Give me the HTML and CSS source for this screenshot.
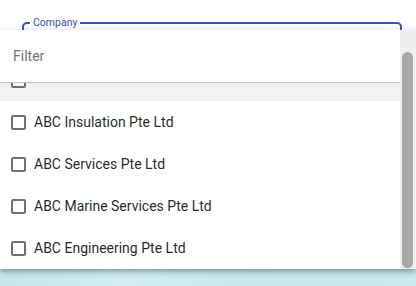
FILE: index.html
```html
<!DOCTYPE html>
<html lang="en">

<head>
  <meta charset="UTF-8" />
  <meta name="viewport" content="width=device-width, initial-scale=1.0" />
  <title>Company Select</title>
  <link rel="stylesheet" href="styles.css">
</head>

<body>
  <div class="card">
    <fieldset class="field">
      <legend>Company</legend>
    </fieldset>
  </div>

  <div class="panel">
    <div class="list" id="list">
      <div class="filter">
        <input type="text" placeholder="Filter" />
      </div>
      <div class="option active"><span class="box"></span></div>
      <div class="option"><span class="box"></span>ABC Insulation Pte Ltd</div>
      <div class="option"><span class="box"></span>ABC Services Pte Ltd</div>
      <div class="option"><span class="box"></span>ABC Marine Services Pte Ltd</div>
      <div class="option"><span class="box"></span>ABC Engineering Pte Ltd</div>
    </div>
    <div class="scrollbar">
      <div class="thumb"></div>
    </div>
  </div>

  <script>
    const list = document.getElementById('list');
    list.scrollTop = list.scrollHeight;
  </script>
</body>

</html>
```

FILE: styles.css
```css
body {
  margin: 0;
  padding: 0;
  font-family: Roboto, 'Liberation Sans', sans-serif;
  background: linear-gradient(90deg, #c4e6ec, #d2eef2 30%, #c8e8ee 60%, #cbe9ef);
  height: 286px;
  overflow: hidden;
}

.card {
  background-color: #fff;
  height: 266px;
  padding-top: 17px;
  box-sizing: border-box;
}

.field {
  margin: 0 14px 0 22px;
  padding: 0 0 0 6px;
  height: 60px;
  border: 2px solid #3f51b5;
  border-radius: 5px;
}

.field legend {
  padding: 0 3px;
  font-size: 10.5px;
  line-height: 12px;
  color: #3f51b5;
}

.panel {
  position: absolute;
  top: 30px;
  left: 0;
  width: 416px;
  height: 239px;
  display: flex;
  background-color: #fff;
  box-shadow: 0 2px 4px -1px rgba(0, 0, 0, 0.2), 0 4px 5px 0 rgba(0, 0, 0, 0.14), 0 1px 10px 0 rgba(0, 0, 0, 0.12);
}

.list {
  flex: 1;
  overflow: hidden;
}

.scrollbar {
  width: 16px;
  background-color: #efefef;
  padding: 22px 3px 1px 2px;
  box-sizing: border-box;
}

.thumb {
  height: 100%;
  background-color: #a8a8a8;
  border-radius: 6px;
}

.filter {
  position: sticky;
  top: 0;
  z-index: 1;
  height: 52px;
  background-color: #fff;
  border-bottom: 1px solid #c2c2c2;
}

.filter input {
  width: 100%;
  height: 100%;
  box-sizing: border-box;
  border: none;
  outline: none;
  padding: 0 13px;
  font-family: Roboto, 'Liberation Sans', sans-serif;
  font-size: 14px;
  color: rgba(0, 0, 0, 0.87);
  background: transparent;
}

.filter input::placeholder {
  color: #757575;
}

.option {
  display: flex;
  align-items: center;
  gap: 8px;
  height: 42px;
  padding-left: 11px;
  font-size: 14px;
  color: rgba(0, 0, 0, 0.87);
}

.option.active {
  background-color: #f2f2f2;
}

.box {
  width: 11px;
  height: 11px;
  border: 2px solid #707070;
  border-radius: 2px;
}
```
